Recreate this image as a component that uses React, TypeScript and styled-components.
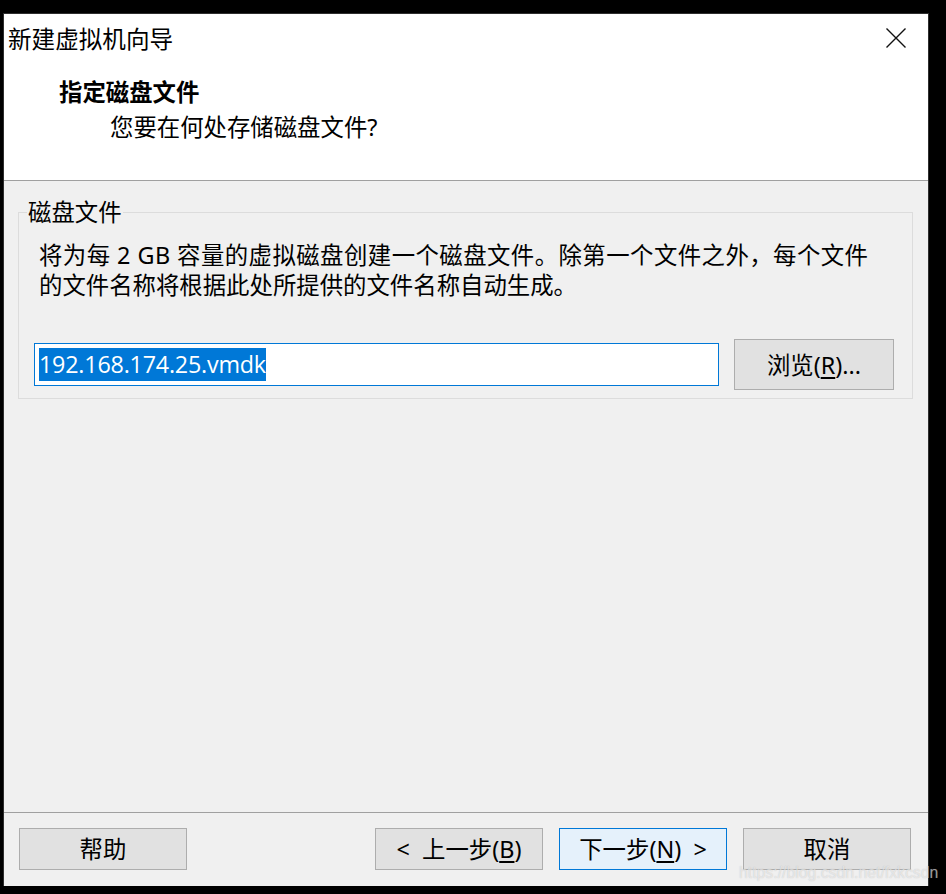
import React from "react";
import styled, { createGlobalStyle } from "styled-components";

const GlobalStyle = createGlobalStyle`
  html, body {
    margin: 0;
    padding: 0;
    background: #000;
  }
  body {
    font-family: "Noto Sans", "Noto Sans CJK SC", sans-serif;
  }
`;

const CJK = `"Noto Sans", "Noto Sans CJK SC", sans-serif`;

const Screen = styled.div`
  position: relative;
  width: 946px;
  height: 894px;
  background: #000;
  padding: 13px 0 0 3px;
  box-sizing: border-box;
  overflow: hidden;
`;

const Dialog = styled.div`
  width: 924px;
  height: 872px;
  border: 1px solid #2e2e2e;
  border-bottom: none;
  background: #f0f0f0;
  display: flex;
  flex-direction: column;
  font-family: ${CJK};
  color: #000;
`;

const Header = styled.div`
  background: #fff;
  height: 166px;
  display: flex;
  flex-direction: column;
  border-bottom: 1px solid #a0a0a0;
`;

const TitleBar = styled.div`
  display: flex;
  align-items: center;
  justify-content: space-between;
  height: 49px;
  padding: 0 22px 0 4px;
`;

const Title = styled.div`
  font-size: 23.6px;
  line-height: 28px;
`;

const CloseButton = styled.div`
  width: 20px;
  height: 20px;
  margin-top: -2px;
  display: flex;
  align-items: center;
  justify-content: center;
`;

const Heading = styled.div`
  font-size: 23.4px;
  font-weight: 700;
  line-height: 30px;
  padding-left: 55px;
  margin-top: 14px;
`;

const SubHeading = styled.div`
  font-size: 23.4px;
  line-height: 30px;
  padding-left: 106px;
  margin-top: 5px;
`;

const Body = styled.div`
  flex: 1;
  padding: 17px 15px 0 14px;
`;

const GroupBox = styled.fieldset`
  margin: 0;
  padding: 14px 17px 8px 15px;
  border: 1px solid #dcdcdc;
  min-width: 0;
`;

const Legend = styled.legend`
  font-size: 23.4px;
  line-height: 28px;
  padding: 0 1px;
  margin-left: -7px;
  color: #000;
`;

const Description = styled.div`
  font-size: 23.4px;
  line-height: 30px;
  padding-left: 5px;
`;

const WideLine = styled.span`
  letter-spacing: 0.45px;
`;

const FileRow = styled.div`
  display: flex;
  align-items: center;
  gap: 15px;
  margin-top: 39px;
`;

const PathInput = styled.div`
  width: 685px;
  height: 43px;
  box-sizing: border-box;
  border: 1px solid #0078d7;
  background: #fff;
  display: flex;
  align-items: center;
  padding: 0 4px;
`;

const Selected = styled.span`
  background: #0078d7;
  color: #fff;
  font-family: "Open Sans", "Noto Sans", sans-serif;
  font-size: 23.3px;
  line-height: 33px;
  letter-spacing: -0.2px;
`;

const Button = styled.div<{ $primary?: boolean; $w?: number; $h?: number }>`
  width: ${(p) => p.$w ?? 168}px;
  height: ${(p) => p.$h ?? 42}px;
  box-sizing: border-box;
  border: 1px solid ${(p) => (p.$primary ? "#0078d7" : "#adadad")};
  background: ${(p) => (p.$primary ? "#e5f1fb" : "#e1e1e1")};
  display: flex;
  align-items: center;
  justify-content: center;
  font-size: 23.4px;
  line-height: 30px;
  white-space: pre;
  flex: none;
`;

const Mnemonic = styled.span`
  text-decoration: underline;
  text-underline-offset: 3px;
`;

const Footer = styled.div`
  border-top: 1px solid #a0a0a0;
  display: flex;
  align-items: center;
  padding: 15px 17px 16px 15px;
  gap: 16px;
`;

const Spacer = styled.div`
  flex: 1;
`;

const Watermark = styled.div`
  position: absolute;
  left: 739px;
  top: 864px;
  font-family: "Liberation Sans", Arial, sans-serif;
  font-size: 15.8px;
  line-height: 18px;
  color: rgba(255, 255, 255, 0.55);
  text-shadow: 0 0 1px rgba(120, 120, 120, 0.4);
  white-space: nowrap;
  pointer-events: none;
`;

export default function App() {
  return (
    <>
      <GlobalStyle />
      <Screen>
        <Dialog>
          <Header>
            <TitleBar>
              <Title>新建虚拟机向导</Title>
              <CloseButton>
                <svg width="20" height="20" viewBox="0 0 20 20">
                  <path d="M0.5 0.5 L19.5 19.5 M19.5 0.5 L0.5 19.5" stroke="#111" strokeWidth="1.4" fill="none" />
                </svg>
              </CloseButton>
            </TitleBar>
            <Heading>指定磁盘文件</Heading>
            <SubHeading>您要在何处存储磁盘文件?</SubHeading>
          </Header>
          <Body>
            <GroupBox>
              <Legend>磁盘文件</Legend>
              <Description>
                <WideLine>将为每 2 GB 容量的虚拟磁盘创建一个磁盘文件。除第一个文件之外，每个文件</WideLine>
                <br />
                的文件名称将根据此处所提供的文件名称自动生成。
              </Description>
              <FileRow>
                <PathInput>
                  <Selected>192.168.174.25.vmdk</Selected>
                </PathInput>
                <Button $w={160} $h={51}>
                  浏览(<Mnemonic>R</Mnemonic>)...
                </Button>
              </FileRow>
            </GroupBox>
          </Body>
          <Footer>
            <Button>帮助</Button>
            <Spacer />
            <Button>
              {"<  上一步("}<Mnemonic>B</Mnemonic>)
            </Button>
            <Button $primary>
              下一步(<Mnemonic>N</Mnemonic>){"  >"}
            </Button>
            <Button>取消</Button>
          </Footer>
        </Dialog>
        <Watermark>https://blog.csdn.net/fxkcsdn</Watermark>
      </Screen>
    </>
  );
}
